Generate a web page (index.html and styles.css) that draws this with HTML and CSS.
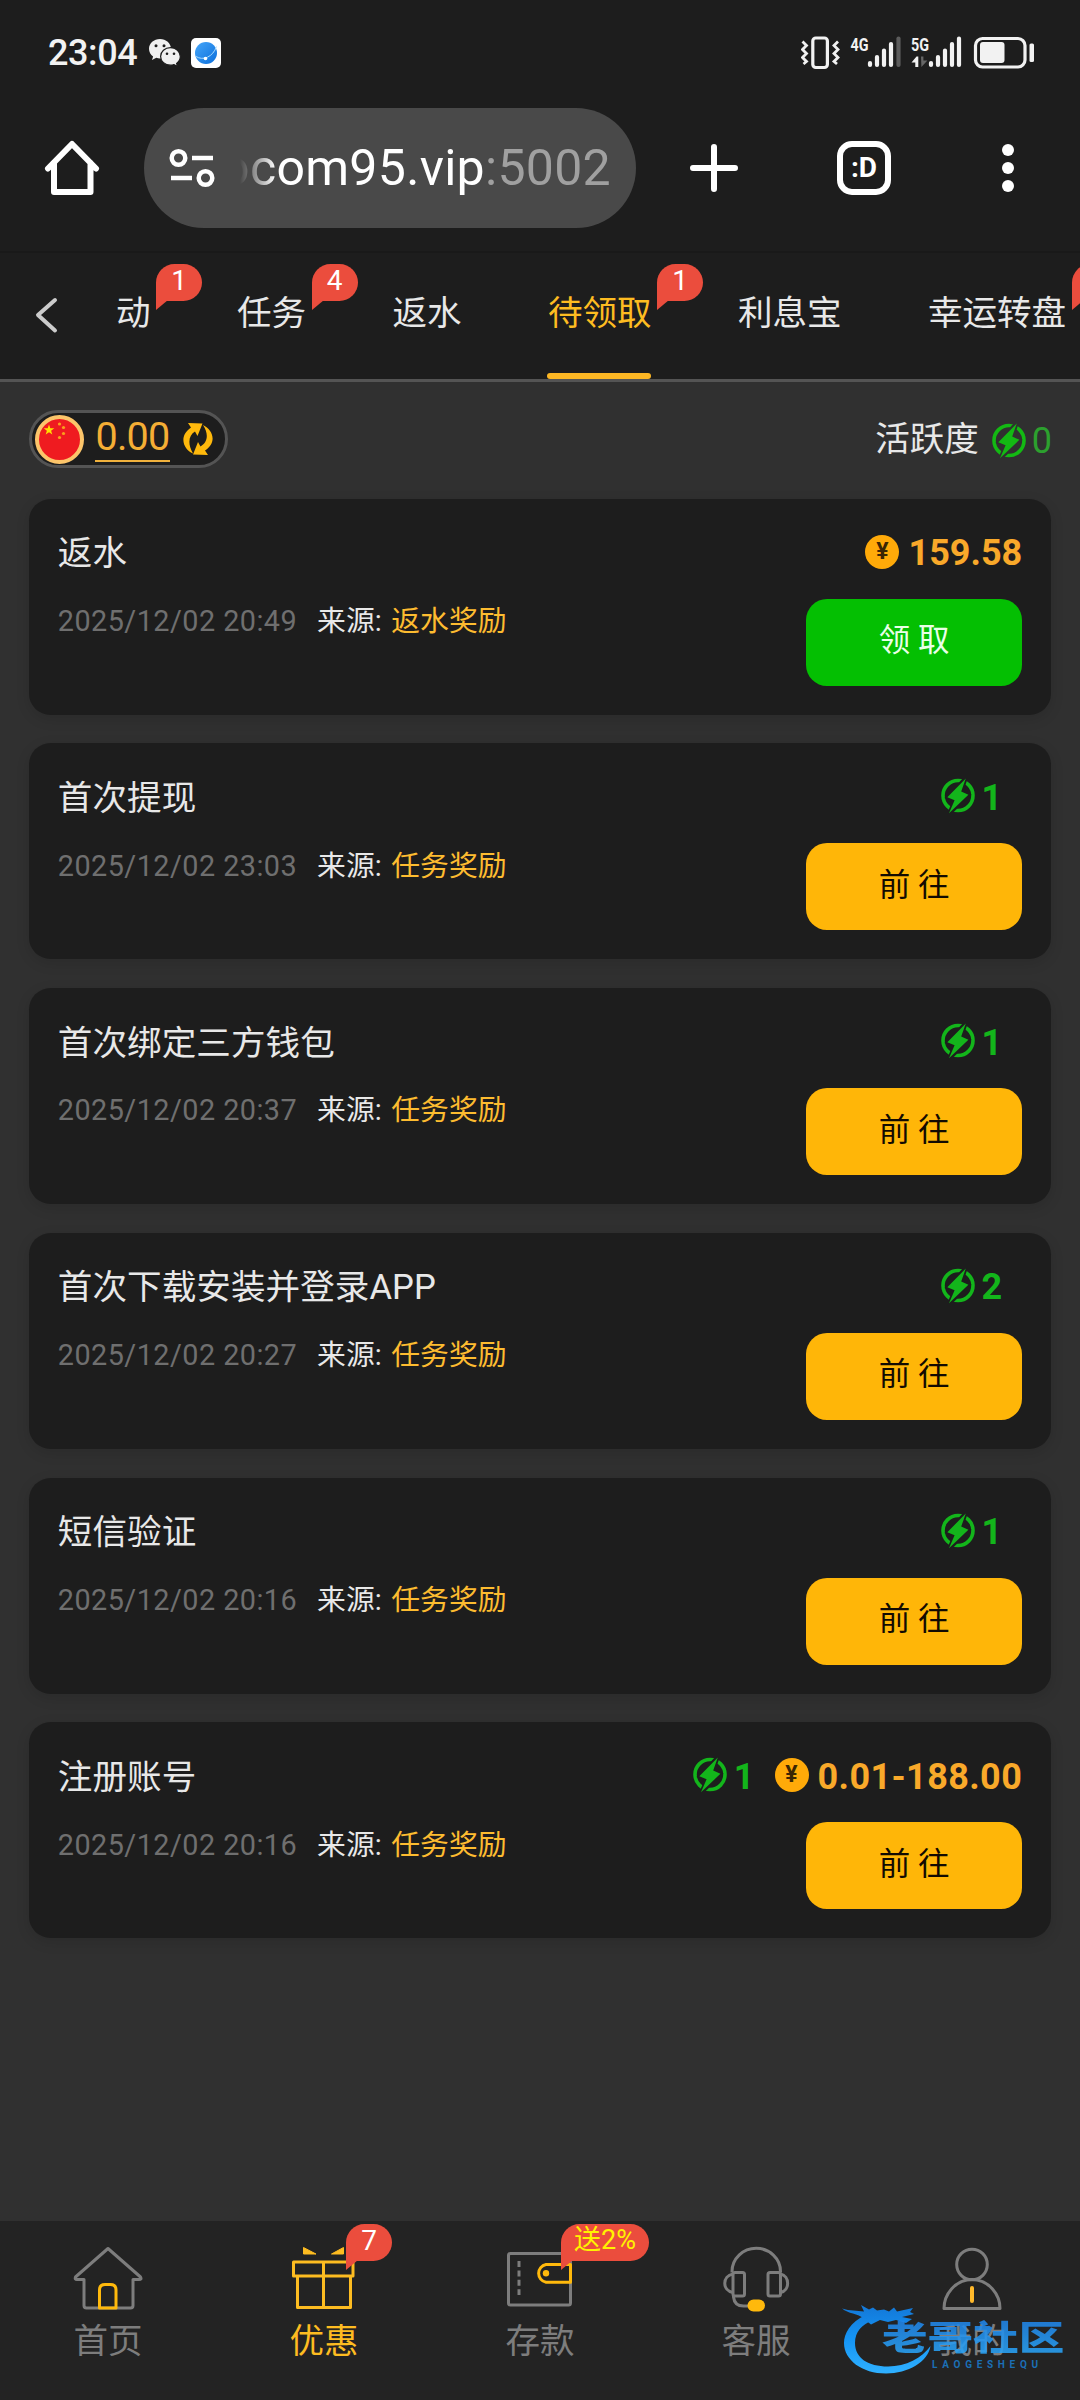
FILE: index.html
```html
<!DOCTYPE html>
<html lang="zh-CN">
<head>
<meta charset="utf-8">
<title>待领取</title>
<link rel="stylesheet" href="styles.css">
</head>
<body>
<svg class="defs" width="0" height="0" aria-hidden="true">
  <defs>
    <mask id="ring-gap">
      <rect width="34" height="36" fill="#fff"/>
      <path d="M26 -2 6 19.5 13.5 22.5 6.5 38 28 17 20.5 13.5Z" fill="#000" stroke="#000" stroke-width="3"/>
    </mask>
  </defs>
  <symbol id="bolt" viewBox="0 0 34 36">
    <circle cx="17" cy="17.5" r="15" fill="none" stroke="currentColor" stroke-width="3.600" mask="url(#ring-gap)"/>
    <path d="M24.8 .5 6.3 19.2 13.6 22.2 8 35.3 27.4 16.8 20.2 13.6Z" fill="currentColor"/>
  </symbol>
</svg>

<div class="screen">
  <header class="status">
    <div class="status-left">
      <span class="clock">23:04</span>
      <svg class="wechat" width="32" height="28" viewBox="0 0 32 28">
        <path d="M11 0C4.900 0 0 4.300 0 9.800c0 3.200 1.600 5.900 4.100 7.700L3 21l4.300-2.200c1.200.4 2.400.6 3.700.6C17 19.400 22 15 22 9.800 22 4.300 17 0 11 0Z" fill="#f0f0f0"/>
        <path d="M21.500 8.700C15.800 8.700 11.600 12.700 11.600 17.500s4.300 8.700 9.900 8.700c1.200 0 2.400-.2 3.500-.6l3.600 2-1-3.200c2.200-1.600 3.700-4 3.700-6.900 0-4.800-4.300-8.800-9.800-8.800Z" fill="#f0f0f0" stroke="#1d1d1d" stroke-width="1.200"/>
        <g fill="#1d1d1d"><circle cx="7" cy="6.700" r="1.500"/><circle cx="15" cy="6.700" r="1.500"/><circle cx="18" cy="14.800" r="1.300"/><circle cx="25" cy="14.800" r="1.300"/></g>
      </svg>
      <svg class="globe" width="30" height="30" viewBox="0 0 30 30">
        <defs><linearGradient id="sea" x1="0" y1="0" x2="1" y2="1"><stop offset="0" stop-color="#45a5f8"/><stop offset="1" stop-color="#0b6fdc"/></linearGradient></defs>
        <rect width="30" height="30" rx="5" fill="#fff"/>
        <circle cx="15" cy="15" r="11" fill="url(#sea)"/>
        <path d="M5 18.500c7 4.500 17 .5 20.500-10" fill="none" stroke="#a9dcff" stroke-width="1"/>
        <circle cx="14.500" cy="20.500" r="1.800" fill="#fff"/>
      </svg>
    </div>
    <svg class="system" width="235" height="46" viewBox="801 30 235 46">
      <g fill="none" stroke="#f2f2f2" stroke-width="3.200">
        <rect x="812.800" y="38" width="14.600" height="29.500" rx="3"/>
        <path d="M802.500 41.500l4 4-4 4 4 4-4 4 4 4-3 2.500M838 41.500l-4 4 4 4-4 4 4 4-4 4 3 2.500" stroke-width="2.800"/>
        <rect x="975.500" y="38.500" width="49.500" height="28.500" rx="7"/>
      </g>
      <g class="net" fill="#f2f2f2">
        <text x="850.500" y="51" textLength="18" lengthAdjust="spacingAndGlyphs">4G</text>
        <text x="911" y="51" textLength="18" lengthAdjust="spacingAndGlyphs">5G</text>
        <rect x="980" y="42" width="24.500" height="21" rx="3"/>
        <rect x="1029.500" y="43.500" width="4.500" height="18.500" rx="1.500"/>
        <path d="M911.500 62.500l5-6h1.800V67h-3v-4.500Z"/>
      </g>
      <path d="M921 56.500h2.400v4h4l-6 6.500Z" fill="#666"/>
      <g fill="none" stroke="#f2f2f2" stroke-width="4.200" stroke-linecap="round">
        <path d="M870 63v2M877 57v8M884 50.500v14.500M891 44v21M931 63v2M938 57v8M945 50.500v14.500M952 44v21M959 38.500v26.500"/>
        <path d="M898.500 38.500v26.500" stroke="#5c5c5c"/>
      </g>
    </svg>
  </header>

  <div class="browser">
    <svg width="56" height="56" viewBox="44 140 56 56" fill="none" stroke="#fff" stroke-width="6" stroke-linecap="round" stroke-linejoin="round">
      <path d="M48 168.500 72 144l24 24.500M54 163v29h36.500v-29"/>
    </svg>
    <div class="address">
      <svg width="46" height="40" viewBox="169 148 46 40" fill="none" stroke="#fff" stroke-width="4.500">
        <circle cx="178.500" cy="158" r="6.800"/><circle cx="205.500" cy="178" r="6.800"/><path d="M192 158h21M171 178h21"/>
      </svg>
      <div class="url"><span>ocom95.vip<span class="port">:5002</span></span></div>
    </div>
    <svg width="50" height="50" viewBox="0 0 50 50" stroke="#fff" stroke-width="6" stroke-linecap="round"><path d="M25 4v42M4 25h42"/></svg>
    <div class="tab-count">:D</div>
    <svg class="more" width="14" height="50" viewBox="0 0 14 50" fill="#fff"><circle cx="7" cy="7" r="6"/><circle cx="7" cy="25" r="6"/><circle cx="7" cy="43" r="6"/></svg>
  </div>

  <nav class="tabs">
    <svg class="back" width="24" height="38" viewBox="0 0 24 38" fill="none" stroke="#ccc" stroke-width="4" stroke-linecap="round" stroke-linejoin="round"><path d="M21 4 4 19 21 34.500"/></svg>
    <div class="tab-list">
      <a class="tab">动<b class="badge">1</b></a>
      <a class="tab">任务<b class="badge">4</b></a>
      <a class="tab">返水</a>
      <a class="tab active">待领取<b class="badge">1</b></a>
      <a class="tab">利息宝</a>
      <a class="tab">幸运转盘<b class="badge"></b></a>
    </div>
  </nav>

  <main class="content">
    <div class="summary">
      <div class="balance">
        <svg width="49" height="49" viewBox="0 0 49 49">
          <circle cx="24.500" cy="24.500" r="22.500" fill="#ef1b20" stroke="#fcc56a" stroke-width="4"/>
          <path d="M14 9.500l1.300 3.800h4l-3.200 2.400 1.200 3.900-3.300-2.400-3.300 2.400 1.200-3.900-3.200-2.400h4Z" fill="#ffe000"/>
          <g fill="#f9a11c"><circle cx="24.500" cy="9" r="1.600"/><circle cx="28.500" cy="12.500" r="1.600"/><circle cx="28.500" cy="18.500" r="1.600"/><circle cx="24.500" cy="22.500" r="1.600"/></g>
        </svg>
        <span class="balance-value">0.00</span>
        <svg class="refresh" width="32" height="34" viewBox="0 0 32 34" fill="#ffb90c">
          <path d="M6 1 20.500 1.500 15.500 14 13 9.500C7 13 5 21 11 31.500 1 27-3.500 14 9 5.500Z"/>
          <path d="M26 33 11 32.500 16 20l2.500 4.500C25 21 27.500 13 21 3 31 8 35.500 20 23 28.500Z"/>
        </svg>
      </div>
      <div class="activity">活跃度<svg class="bolt" width="34" height="36"><use href="#bolt"/></svg><span class="activity-value">0</span></div>
    </div>

    <article class="card">
      <div class="info"><h2>返水</h2><p><time>2025/12/02 20:49</time>来源: <em>返水奖励</em></p></div>
      <div class="side"><div class="reward"><span class="money"><i class="coin">¥</i>159.58</span></div><button class="claim">领 取</button></div>
    </article>
    <article class="card">
      <div class="info"><h2>首次提现</h2><p><time>2025/12/02 23:03</time>来源: <em>任务奖励</em></p></div>
      <div class="side"><div class="reward"><span class="points"><svg width="34" height="36"><use href="#bolt"/></svg>1</span></div><button>前 往</button></div>
    </article>
    <article class="card">
      <div class="info"><h2>首次绑定三方钱包</h2><p><time>2025/12/02 20:37</time>来源: <em>任务奖励</em></p></div>
      <div class="side"><div class="reward"><span class="points"><svg width="34" height="36"><use href="#bolt"/></svg>1</span></div><button>前 往</button></div>
    </article>
    <article class="card">
      <div class="info"><h2>首次下载安装并登录APP</h2><p><time>2025/12/02 20:27</time>来源: <em>任务奖励</em></p></div>
      <div class="side"><div class="reward"><span class="points"><svg width="34" height="36"><use href="#bolt"/></svg>2</span></div><button>前 往</button></div>
    </article>
    <article class="card">
      <div class="info"><h2>短信验证</h2><p><time>2025/12/02 20:16</time>来源: <em>任务奖励</em></p></div>
      <div class="side"><div class="reward"><span class="points"><svg width="34" height="36"><use href="#bolt"/></svg>1</span></div><button>前 往</button></div>
    </article>
    <article class="card">
      <div class="info"><h2>注册账号</h2><p><time>2025/12/02 20:16</time>来源: <em>任务奖励</em></p></div>
      <div class="side"><div class="reward"><span class="points"><svg width="34" height="36"><use href="#bolt"/></svg>1</span><span class="money range"><i class="coin">¥</i>0.01-188.00</span></div><button>前 往</button></div>
    </article>
  </main>

  <nav class="bottom">
    <a>
      <svg width="70" height="66" viewBox="73 2246 70 66" fill="none" stroke="#7d7d7d" stroke-width="3" stroke-linejoin="round" stroke-linecap="round">
        <path d="M108 2248.500 75.500 2277q-1 2.500 1.500 2.500h7v26q0 2.500 2.500 2.500h44q2.500 0 2.500-2.500v-26h6q3 0 1.500-2.500Z"/>
        <path d="M99.500 2308v-18q0-5.500 5.500-5.500h5.500q5.500 0 5.500 5.500v18Z" stroke="#ffb90c"/>
      </svg>首页</a>
    <a class="active">
      <svg width="70" height="66" viewBox="289 2246 70 66" fill="none" stroke="#fdbc21" stroke-width="3" stroke-linejoin="round">
        <path d="M293.500 2262h59.500v14h-59.500ZM297.500 2276h53v31.500h-53ZM323.500 2262v45.500"/>
        <path d="M303.500 2247.500 316 2254h-12.500ZM343.500 2247.500 331.500 2254h12Z" fill="#fdbc21" stroke-width="1"/>
      </svg>优惠<b class="badge">7</b></a>
    <a>
      <svg width="70" height="66" viewBox="505 2246 70 66" fill="none" stroke="#7d7d7d" stroke-width="3" stroke-linejoin="round">
        <rect x="508.500" y="2253.500" width="62" height="51.500" rx="2"/>
        <path d="M519 2261v34" stroke-dasharray="6 3.400"/>
        <path d="M570.500 2264.500H546a9 9 0 0 0 0 17.700h24.500Z" stroke="#ffb90c"/><circle cx="546" cy="2273.300" r="3.200" fill="#ffb90c" stroke="none"/>
      </svg>存款<b class="badge gift">送2%</b></a>
    <a>
      <svg width="70" height="66" viewBox="721 2246 70 66" fill="none" stroke="#7d7d7d" stroke-width="3">
        <path d="M732 2272.500v-1a24 23 0 0 1 48.500 0v1M733.500 2296v1q1 9 10 9h5"/>
        <rect x="733" y="2272.500" width="11.500" height="23.500" rx="2"/><rect x="768" y="2272.500" width="12.500" height="23.500" rx="2"/>
        <path d="M733 2274c-11 2-11 16.500 0 18.500M780.500 2274c9.500 2 9.500 16.500 0 18.500"/>
        <rect x="747.500" y="2299.500" width="17.500" height="12" rx="6" fill="#ffb90c" stroke="none"/>
      </svg>客服</a>
    <a>
      <svg width="70" height="66" viewBox="937 2246 70 66" fill="none" stroke="#7d7d7d" stroke-width="3" stroke-linejoin="round">
        <circle cx="972" cy="2264.500" r="15.300"/><path d="M944 2308.500h56q0-11-7.500-19.500-8.500-9.500-20.500-9.500t-20.500 9.500q-7.500 8.500-7.500 19.500Z"/>
        <path d="M972 2288v13" stroke="#ffb92b" stroke-width="4" stroke-linecap="round"/>
      </svg>我的</a>
    <div class="watermark">
      <svg width="94" height="78" viewBox="840 2298 94 78">
        <defs><linearGradient id="dragon" x1="0" y1="2306" x2="0" y2="2373" gradientUnits="userSpaceOnUse"><stop offset="0" stop-color="#1378d8"/><stop offset=".5" stop-color="#1595f5"/><stop offset="1" stop-color="#2fb0ff"/></linearGradient></defs>
        <g fill="url(#dragon)">
          <path d="M866 2315C850 2322 844 2334 844 2343c0 17 18 30.500 42 30.500 22 0 42-11.500 44.500-27.500-8.500 12-24.500 20.500-42.500 20.500-20 0-33-8.500-33-23.500 0-11 7-19 17-22Z"/>
          <path d="M842 2308.500c8 2.500 15 2 22 3L861 2305l8 4.500 4-2 4 3 7-1 5 2 5-4 3 4 16-3.500-3 4 4 2-12 3 10 2-6 4-10-3-8 2-8-2-9 4.500-7-5.500C858 2313 848 2314 842 2308.500Z"/>
        </g>
      </svg>
      <div class="wm-text"><strong>老哥社区</strong><small>LAOGESHEQU</small></div>
    </div>
  </nav>
</div>
</body>
</html>
```

FILE: styles.css
```css
* { box-sizing: border-box; }
body {
  margin: 0;
  background: #303030;
  color: #e8e8e8;
  font-family: Roboto, "Noto Sans CJK SC", sans-serif;
}
svg { display: block; flex: none; }
.defs { position: absolute; }
h2, p { margin: 0; font-weight: 400; }
em, i { font-style: normal; }

.screen {
  width: 1080px;
  height: 2400px;
  display: flex;
  flex-direction: column;
  overflow: hidden;
}

/* phone status bar */
.status {
  height: 108px;
  background: #1d1d1d;
  display: flex;
  align-items: flex-start;
  justify-content: space-between;
  padding: 36px 44px 0 48px;
}
.status-left { display: flex; }
.clock { width: 101px; font-size: 36px; line-height: 34px; font-weight: 500; letter-spacing: -.4px; color: #f2f2f2; }
.wechat { margin-top: 3px; }
.globe { margin: 2px 0 0 10px; }
.system { margin-top: -6px; }
.net { font: 700 19px Roboto, sans-serif; }

/* browser toolbar */
.browser {
  height: 145px;
  background: #1d1d1d;
  border-bottom: 2px solid #191919;
  display: flex;
  align-items: flex-start;
  padding-left: 44px;
}
.browser > svg { margin-top: 32px; }
.address {
  width: 492px;
  height: 120px;
  margin: 0 53px 0 44px;
  border-radius: 60px;
  background: #494949;
  display: flex;
  align-items: center;
  padding: 0 25px;
  gap: 25px;
}
.url {
  width: 372px;
  display: flex;
  justify-content: flex-end;
  overflow: hidden;
  white-space: nowrap;
  font-size: 50px;
  line-height: 70px;
  letter-spacing: .3px;
  color: #fff;
  -webkit-mask-image: linear-gradient(90deg, transparent, #000 36px);
  mask-image: linear-gradient(90deg, transparent, #000 36px);
}
.port { color: #a0a0a0; }
.browser > svg:nth-of-type(2) { margin-top: 35px; }
.tab-count {
  width: 54px;
  height: 54px;
  margin: 33px 110px 0 98px;
  border: 6px solid #fff;
  border-radius: 15px;
  color: #fff;
  font-size: 28px;
  font-weight: 700;
  line-height: 42px;
  text-align: center;
}
.browser > .more { margin-top: 35px; }

/* category tabs */
.tabs {
  height: 129px;
  background: #1d1d1d;
  border-bottom: 3px solid #545454;
  display: flex;
}
.back { margin: 43px 58px 0 34px; }
.tab-list { display: flex; gap: 86.4px; white-space: nowrap; }
.tab {
  position: relative;
  height: 126px;
  font-size: 34.56px;
  line-height: 120px;
}
.active { color: #fdbc21; }
.tab.active::after {
  content: "";
  position: absolute;
  left: -1px;
  right: 1px;
  bottom: 0;
  height: 6px;
  border-radius: 3px;
  background: #fdb724;
}
.badge {
  position: absolute;
  left: calc(100% + 5.5px);
  top: 11px;
  min-width: 46px;
  height: 37px;
  padding: 0 12px;
  border-radius: 19px 19px 19px 0;
  background: #eb4d3d;
  color: #fff;
  font-size: 28px;
  font-weight: 400;
  line-height: 33px;
  text-align: center;
}
.badge::after {
  content: "";
  position: absolute;
  left: 0;
  top: 36px;
  border-top: 10px solid #eb4d3d;
  border-right: 12px solid transparent;
}

/* page body */
.content {
  flex: 1;
  padding: 28px 29px 0;
}
.summary {
  height: 88.500px;
  display: flex;
  justify-content: space-between;
  align-items: flex-start;
}
.balance {
  width: 199px;
  height: 58px;
  border: 3px solid #545454;
  border-radius: 29px;
  background: #1d1d1d;
  display: flex;
  align-items: center;
  padding-left: 3px;
}
.balance-value {
  width: 75px;
  height: 44px;
  margin: 2px 12px 0 11px;
  border-bottom: 2px solid #f0b13c;
  color: #f5ae35;
  font-size: 39.500px;
  line-height: 38px;
  letter-spacing: -.7px;
  text-align: center;
}
.activity {
  height: 58px;
  display: flex;
  align-items: center;
  font-size: 34.56px;
  line-height: 60px;
}
.bolt { margin: 4px 6px 0 13px; color: #13b913; }
.activity-value { color: #2ca02e; font-size: 36px; padding-top: 3px; margin-right: -1px; }

.card {
  height: 216px;
  margin-bottom: 28.8px;
  padding: 28.500px 28.8px 0;
  border-radius: 21.6px;
  background: #1d1d1d;
  box-shadow: 0 4px 14px rgba(0, 0, 0, .12);
  display: flex;
  justify-content: space-between;
}
.card h2 { font-size: 34.56px; line-height: 52px; letter-spacing: .08px; }
.card p { margin-top: 21.8px; font-size: 28.8px; line-height: 40px; }
.card time { margin-right: 20px; color: #6f6f6f; letter-spacing: .45px; }
.card em { margin-left: 2.500px; color: #fdbc30; }
.side { display: flex; flex-direction: column; align-items: flex-end; }
.reward {
  height: 52px;
  display: flex;
  align-items: center;
  font-size: 36px;
  font-weight: 700;
  line-height: 52px;
}
.money, .points { display: flex; align-items: center; }
.money { gap: 9px; color: #f9a92a; }
.money .coin {
  width: 34px;
  height: 34px;
  border-radius: 50%;
  background: #ffaa09;
  color: #3a2604;
  font-size: 23px;
  letter-spacing: 0;
  line-height: 34px;
  text-align: center;
}
.coin, .points svg { margin-bottom: 3px; }
.points { gap: 7px; margin-right: 20px; color: #13b51b; }
.range { letter-spacing: .4px; }
.side button {
  width: 216px;
  height: 87px;
  margin-top: 19.500px;
  padding: 0 0 2px;
  border: 0;
  border-radius: 21px;
  background: #ffb608;
  color: #120b02;
  font: 31.500px/80px Roboto, "Noto Sans CJK SC", sans-serif;
}
.side .claim { background: #04bf02; color: #e9ffe8; }

/* bottom navigation */
.bottom {
  position: relative;
  height: 179px;
  background: #232323;
  display: grid;
  grid-template-columns: repeat(5, 1fr);
}
.bottom a {
  position: relative;
  display: flex;
  flex-direction: column;
  align-items: center;
  padding-top: 25px;
  color: #7d7d7d;
  font-size: 34.56px;
  line-height: 58px;
}
.bottom a.active { color: #fdbc21; }
.bottom .badge { left: 130px; top: 3px; line-height: 33px; }
.bottom .gift { left: 129px; width: 88px; padding: 0; color: #fff200; font-size: 27px; }

.watermark {
  position: absolute;
  left: 840px;
  top: 77px;
  display: flex;
}
.wm-text { width: 190px; margin: 20px 0 0 -52px; }
.wm-text strong {
  display: block;
  width: 136px;
  height: 40px;
  font-size: 34px;
  line-height: 40px;
  font-weight: 900;
  white-space: nowrap;
  transform: scaleX(1.34);
  transform-origin: 0 0;
  color: transparent;
  background: linear-gradient(#1f82e8, #2ba8f8);
  -webkit-background-clip: text;
  background-clip: text;
  opacity: .88;
}
.wm-text small {
  display: block;
  margin: 1px 0 0 50px;
  font: 700 10px/12px Roboto, sans-serif;
  letter-spacing: 4.700px;
  color: #1b6fb5;
}
```
